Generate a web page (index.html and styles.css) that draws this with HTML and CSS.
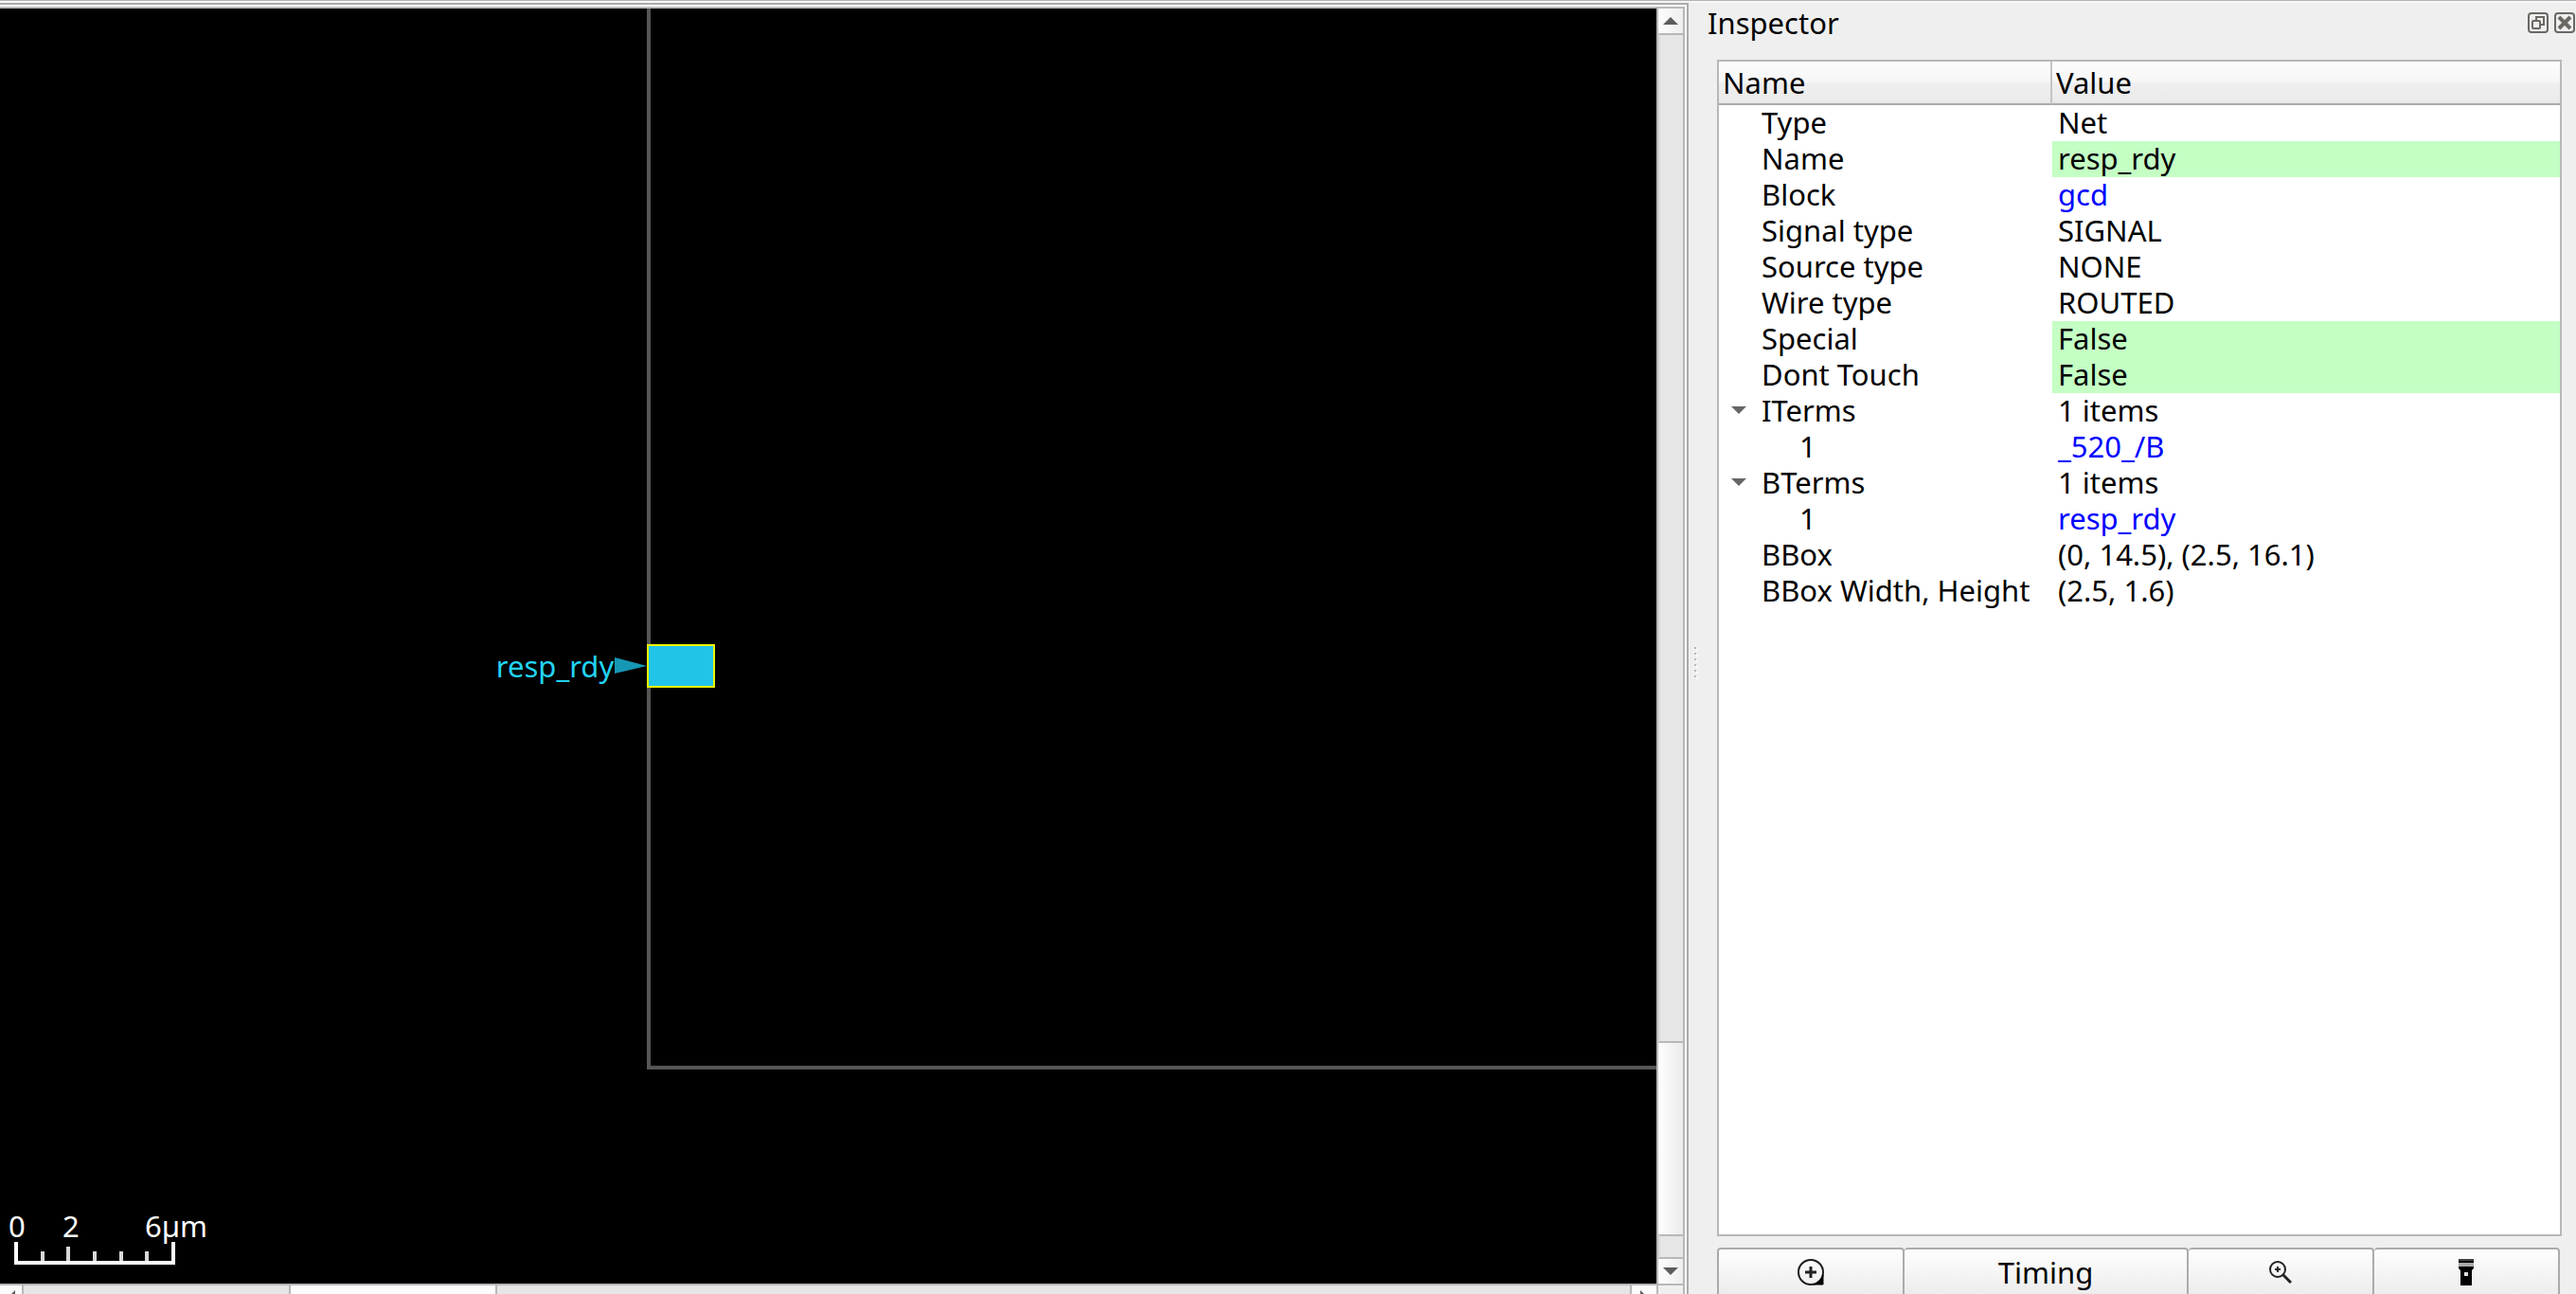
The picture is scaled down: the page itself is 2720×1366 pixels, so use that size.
FILE: index.html
```html
<!DOCTYPE html>
<html lang="en">
<head>
<meta charset="utf-8">
<title>Layout viewer</title>
<link rel="stylesheet" href="styles.css">
</head>
<body>
<div class="window">
  <main class="view">
    <section class="canvas" aria-label="Layout">
      <div class="die"></div>
      <div class="pin">
        <span class="pin-name">resp_rdy</span>
        <svg class="pin-arrow" width="34" height="18" viewBox="0 0 34 18"><path d="M0 0L34 9L0 17Z" fill="#1698b4"/></svg>
        <div class="pin-shape"></div>
      </div>
      <div class="ruler">
        <span class="mark mark-start">0</span>
        <span class="mark mark-mid">2</span>
        <span class="mark mark-end">6µm</span>
        <svg class="ruler-line" width="170" height="24" viewBox="0 0 170 24"><path d="M2 0V22H168V0" fill="none" stroke="#fff" stroke-width="4"/><path d="M30 10V20M85 10V20M113 10V20M140 10V20M57 5V20" stroke="#d8d8d8" stroke-width="4"/></svg>
      </div>
    </section>
    <div class="vscroll">
      <button class="step" type="button" aria-label="Scroll up"><svg width="16" height="8" viewBox="0 0 16 8"><path d="M0 8L8 0L16 8Z" fill="#5c5c5c"/></svg></button>
      <div class="groove groove-above"></div>
      <div class="thumb"></div>
      <div class="groove groove-below"></div>
      <button class="step" type="button" aria-label="Scroll down"><svg width="16" height="8" viewBox="0 0 16 8"><path d="M0 0L8 8L16 0Z" fill="#5c5c5c"/></svg></button>
    </div>
    <div class="hscroll">
      <button class="step step-left" type="button" aria-label="Scroll left"><svg width="8" height="16" viewBox="0 0 8 16"><path d="M8 0L0 8L8 16Z" fill="#5c5c5c"/></svg></button>
      <div class="groove groove-before"></div>
      <div class="thumb"></div>
      <div class="groove groove-after"></div>
      <button class="step step-right" type="button" aria-label="Scroll right"><svg width="8" height="16" viewBox="0 0 8 16"><path d="M0 0L8 8L0 16Z" fill="#5c5c5c"/></svg></button>
    </div>
    <div class="corner"></div>
  </main>
  <div class="splitter"><i></i><i></i><i></i><i></i><i></i><i></i></div>
  <aside class="dock">
    <header class="dock-title">
      <h1>Inspector</h1>
      <button type="button" aria-label="Float"><svg width="22" height="22" viewBox="0 0 22 22" fill="none" stroke="#6a6862" stroke-width="2"><rect x="1" y="1" width="20" height="20" rx="3"/><path d="M9 8V5H17V13H14"/><rect x="5" y="9" width="8" height="8" rx="1"/></svg></button>
      <button type="button" aria-label="Close"><svg width="22" height="22" viewBox="0 0 22 22" fill="none" stroke="#6a6862" stroke-width="2"><rect x="1" y="1" width="20" height="20" rx="3"/><path d="M5 5L17 17M17 5L5 17" stroke-width="4"/></svg></button>
    </header>
    <div class="tree">
      <table>
        <thead><tr><th class="col-name" scope="col">Name</th><th scope="col">Value</th></tr></thead>
        <tbody>
          <tr><td>Type</td><td>Net</td></tr>
          <tr><td>Name</td><td class="editable">resp_rdy</td></tr>
          <tr><td>Block</td><td><a href="#gcd">gcd</a></td></tr>
          <tr><td>Signal type</td><td>SIGNAL</td></tr>
          <tr><td>Source type</td><td>NONE</td></tr>
          <tr><td>Wire type</td><td>ROUTED</td></tr>
          <tr><td>Special</td><td class="editable">False</td></tr>
          <tr><td>Dont Touch</td><td class="editable">False</td></tr>
          <tr><td class="parent"><button type="button" aria-label="Collapse ITerms"><svg width="16" height="8" viewBox="0 0 16 8"><path d="M0 0H16L8 8Z" fill="#666"/></svg></button>ITerms</td><td>1 items</td></tr>
          <tr><td class="child">1</td><td><a href="#iterm">_520_/B</a></td></tr>
          <tr><td class="parent"><button type="button" aria-label="Collapse BTerms"><svg width="16" height="8" viewBox="0 0 16 8"><path d="M0 0H16L8 8Z" fill="#666"/></svg></button>BTerms</td><td>1 items</td></tr>
          <tr><td class="child">1</td><td><a href="#bterm">resp_rdy</a></td></tr>
          <tr><td>BBox</td><td>(0, 14.5), (2.5, 16.1)</td></tr>
          <tr><td>BBox Width, Height</td><td>(2.5, 1.6)</td></tr>
        </tbody>
      </table>
    </div>
    <div class="actions">
      <button type="button" aria-label="Zoom to"><svg width="28" height="28" viewBox="0 0 28 28"><circle cx="14" cy="14" r="13" fill="none" stroke="#1c1c1c" stroke-width="2"/><path d="M14 8V20M8 14H20" stroke="#222" stroke-width="3"/><path d="M27 17V27H17Q24 25 27 17Z" stroke="#000"/></svg></button>
      <button type="button">Timing</button>
      <button type="button" aria-label="Zoom in"><svg width="24" height="24" viewBox="0 0 24 24" fill="none" stroke="#222" stroke-width="2"><circle cx="9" cy="9" r="8"/><path d="M14 14L23 23" stroke-width="3"/><path d="M9 6V12M6 9H12"/></svg></button>
      <button type="button" aria-label="Highlight"><svg width="16" height="28" viewBox="0 0 16 28"><path d="M0 0H16V2H0Z" fill="#444"/><path d="M0 2H16V4H0Z"/><path d="M0 4H16V8H0Z" fill="#aaa"/><path d="M0 8H16V10L14 12V28H2V12L0 10Z"/><path d="M6 14H10V18H6Z" fill="#ddd"/></svg></button>
    </div>
  </aside>
</div>
</body>
</html>
```
FILE: styles.css
```css
* { box-sizing: border-box; }

body {
  margin: 0;
  overflow: hidden;
  background: #efefef;
  color: #000;
  font: 31px/38px "Noto Sans", "Open Sans", sans-serif;
}

button {
  display: flex;
  align-items: center;
  justify-content: center;
  margin: 0;
  padding: 0;
  border: 0;
  background: none;
  color: inherit;
  font: inherit;
}

svg { display: block; flex: none; }

.window {
  display: flex;
  height: 100vh;
  border-top: 1px solid #b4b4b4;
  box-shadow: inset 0 2px #f6f6f6;
}

/* Layout view with its scroll bars */
.view {
  flex: 1;
  display: grid;
  grid-template: minmax(0, 1fr) 11px / minmax(0, 1fr) 30px;
  margin-top: 2px;
  border: solid #ababab;
  border-width: 2px 2px 0 0;
  box-shadow: inset -2px 2px #fff;
  padding: 2px 2px 0 0;
}

.canvas {
  position: relative;
  overflow: hidden;
  border-top: 2px solid #b8b8b8;
  background: #000;
}

.die {
  position: absolute;
  top: 0;
  left: 683px;
  right: 0;
  bottom: 226px;
  border: solid #565656;
  border-width: 0 0 4px 4px;
}

.pin {
  position: absolute;
  top: 671px;
  left: 523px;
  display: flex;
  align-items: center;
  color: #22d3f5;
}

.pin-name { width: 126px; line-height: 44px; text-align: center; white-space: nowrap; }

.pin-shape {
  width: 72px;
  height: 46px;
  border: 2px solid #eef500;
  background: #22c3e8;
}

.ruler {
  position: absolute;
  left: 15px;
  bottom: 20px;
  width: 170px;
  height: 62px;
  color: #fff;
}

.ruler-line { position: absolute; left: 0; bottom: 0; }
.mark { position: absolute; top: 2px; }
.mark-start { left: -6px; }
.mark-mid { left: 51px; }
.mark-end { left: 138px; }

.vscroll {
  display: flex;
  flex-direction: column;
  border: solid #b8b8b8;
  border-width: 2px 2px 0;
}

.step {
  flex: none;
  width: 26px;
  height: 26px;
  background: linear-gradient(90deg, #fdfdfd, #eee);
}

.groove { background: #e6e6e6; }
.vscroll .groove { border-left: 2px solid #dadada; border-bottom: 2px solid #b8b8b8; }
.vscroll .groove-above { flex: 1062; border-top: 2px solid #b8b8b8; }
.vscroll .groove-below { flex: 22; border-top: 2px solid #b8b8b8; }
.vscroll .thumb { flex: 202; background: linear-gradient(90deg, #fefefe, #ebebeb); }

.hscroll {
  display: flex;
  overflow: hidden;
  border-top: 2px solid #b8b8b8;
}

.hscroll .step { background: #fcfcfc; }
.hscroll .step-left { width: 23px; }
.hscroll .groove { height: 26px; border: solid #b8b8b8; border-width: 0 2px; }
.hscroll .groove-before { flex: 280; }
.hscroll .groove-after { flex: 1196; }
.hscroll .thumb { flex: 216; height: 26px; background: #fcfcfc; }

.corner { border: solid #b8b8b8; border-width: 2px 2px 0; }

.splitter {
  flex: none;
  display: flex;
  flex-direction: column;
  justify-content: center;
  gap: 4px;
  width: 16px;
  padding: 30px 0 0 6px;
}

.splitter i {
  width: 2px;
  height: 2px;
  background: #b8b8b8;
  box-shadow: 2px 2px #fafafa;
}

/* Inspector dock */
.dock {
  flex: none;
  display: flex;
  flex-direction: column;
  width: 921px;
  padding-left: 4px;
}

.dock-title {
  display: flex;
  align-items: center;
  gap: 6px;
  height: 46px;
  padding-right: 1px;
}

.dock-title h1 { flex: 1; margin: 0; font: inherit; line-height: 48px; height: 48px; }

.tree {
  flex: 1;
  min-height: 0;
  margin: 16px 15px 12px 10px;
  overflow: hidden;
  border: 2px solid #b8b8b8;
  background: #fff;
}

table {
  width: 100%;
  table-layout: fixed;
  border-collapse: separate;
  border-spacing: 0;
  line-height: 36px;
}

th {
  height: 46px;
  padding: 0 4px;
  border-bottom: 2px solid #ababab;
  background: linear-gradient(#fdfdfd, #f6f6f6 50%, #efefef 50%, #ebebeb 94%, #e4e4e4);
  font-weight: normal;
  text-align: left;
}

.col-name { width: 352px; border-right: 2px solid #c4c4c4; }

td { height: 38px; padding: 0 6px; vertical-align: top; white-space: nowrap; }
td:first-child { padding: 0 0 0 45px; }
td.child:first-child { padding-left: 85px; }

.parent { position: relative; }
.parent button { position: absolute; top: 0; left: 13px; height: 36px; }

.editable { background: #c4ffc4; }

a { color: #00f; text-decoration: none; }

.actions {
  flex: none;
  display: grid;
  grid-template-columns: 198fr 300fr 196fr 196fr;
  height: 49px;
  margin: 0 17px 0 10px;
  overflow: hidden;
}

.actions button {
  height: 52px;
  border: 2px solid #ababab;
  border-left-width: 0;
  border-radius: 4px;
  background: linear-gradient(#fefefe, #ececec);
}

.actions button:first-child { border-left-width: 2px; }
```
